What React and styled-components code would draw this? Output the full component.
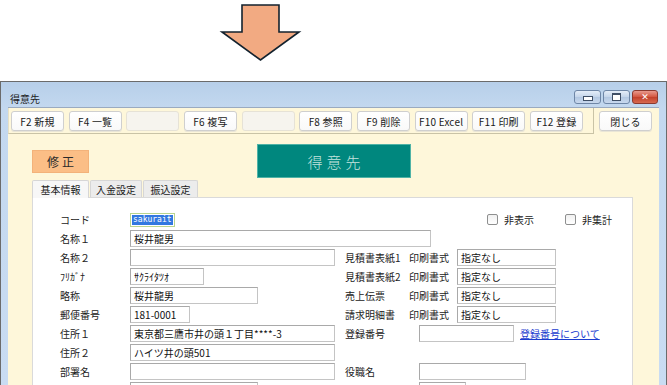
import styled, { createGlobalStyle } from "styled-components";

const GlobalStyle = createGlobalStyle`
  html, body {
    margin: 0;
    padding: 0;
    background: #ffffff;
  }
  body {
    font-family: "Noto Sans CJK JP", "Noto Sans", sans-serif;
    font-size: 10px;
    color: #222;
  }
`;

const Page = styled.div`
  width: 667px;
  height: 385px;
  overflow: hidden;
  display: flex;
  flex-direction: column;
`;

const ArrowArea = styled.div`
  height: 81px;
  flex: none;
`;

const Window = styled.div`
  flex: 1;
  display: flex;
  flex-direction: column;
  border: 1px solid #6b6b6b;
  border-bottom: none;
  background: linear-gradient(#b7cfe9 0px, #c3d8ef 26px, #c9dcf2 100%);
  padding: 0 7px;
  min-height: 0;
`;

const TitleBar = styled.div`
  height: 25px;
  flex: none;
  display: flex;
  align-items: flex-start;
  justify-content: space-between;
`;

const TitleText = styled.div`
  padding: 9px 0 0 2px;
  font-size: 10px;
  color: #1e1e1e;
`;

const WinButtons = styled.div`
  display: flex;
  gap: 2px;
  margin-top: 8px;
  margin-right: 1px;
`;

const WinBtn = styled.div`
  width: ${(p) => (p.$close ? 26 : 27)}px;
  height: 14px;
  box-sizing: border-box;
  border: 1px solid ${(p) => (p.$close ? "#8b3a30" : "#6e86a6")};
  border-radius: 3px;
  background: ${(p) =>
    p.$close
      ? "linear-gradient(#e8998d, #d3553f 50%, #c2402b 51%, #d76a4f)"
      : "linear-gradient(#e4edf8, #c4d5ea 50%, #b2c7e1 51%, #c9d9ee)"};
  display: flex;
  align-items: center;
  justify-content: center;
  color: #fff;
  font-family: "DejaVu Sans", sans-serif;
  font-size: 9px;
  font-weight: bold;
  line-height: 1;
`;

const MinGlyph = styled.span`
  display: block;
  width: 8px;
  height: 3px;
  margin-top: 3px;
  background: #fff;
  border: 1px solid #3f4f66;
`;

const MaxGlyph = styled.span`
  display: block;
  width: 7px;
  height: 5px;
  border: 1px solid #3f4f66;
  border-top-width: 2px;
  background: #fff;
`;

const Client = styled.div`
  flex: 1;
  background: #fef7da;
  border-top: 1px solid #9aaac0;
  display: flex;
  flex-direction: column;
  min-height: 0;
`;

const TopBar = styled.div`
  display: flex;
  align-items: flex-start;
  flex: none;
`;

const ToolPanel = styled.div`
  width: 586px;
  box-sizing: border-box;
  display: flex;
  gap: 4.67px;
  padding: 3px 0 2px 2px;
  border-right: 1px solid #c9c3a6;
  border-bottom: 1px solid #c9c3a6;
  border-left: 1px solid #e6e0c6;
`;

const ToolButton = styled.div`
  width: 53px;
  height: 20px;
  box-sizing: border-box;
  border: 1px solid ${(p) => (p.$blank ? "#e6e2d6" : "#cfcfcf")};
  border-radius: 3px;
  background: ${(p) =>
    p.$blank ? "#f6f4ee" : "linear-gradient(#ffffff, #f9f9f9)"};
  box-shadow: ${(p) => (p.$blank ? "none" : "0 1px 0 #e9e5d6")};
  display: flex;
  align-items: center;
  justify-content: center;
  font-size: 10px;
  color: #1a1a1a;
  white-space: nowrap;
  letter-spacing: 0.2px;
`;

const CloseButton = styled(ToolButton)`
  margin: 3px 0 0 5px;
`;

const HeaderRow = styled.div`
  display: flex;
  align-items: center;
  padding-left: 24px;
  margin-top: 10px;
  flex: none;
`;

const ModeBadge = styled.div`
  width: 57px;
  height: 23px;
  background: #fbbe86;
  border: 1px solid #f3b27a;
  box-sizing: border-box;
  display: flex;
  align-items: center;
  justify-content: center;
  font-size: 12px;
  color: #2a2a2a;
  letter-spacing: 3px;
  padding-left: 3px;
`;

const FormTitle = styled.div`
  margin-left: 168px;
  width: 154px;
  height: 34px;
  box-sizing: border-box;
  background: #00877e;
  border: 1px solid #4fb3a6;
  display: flex;
  align-items: center;
  justify-content: center;
  font-size: 15px;
  font-weight: 300;
  letter-spacing: 4px;
  color: #c4e4de;
  padding-left: 4px;
`;

const Tabs = styled.div`
  display: flex;
  margin: 2px 0 0 24px;
  height: 17px;
  flex: none;
`;

const Tab = styled.div`
  width: ${(p) => p.$w}px;
  box-sizing: border-box;
  border: 1px solid #d6d6d6;
  border-bottom: none;
  border-radius: 2px 2px 0 0;
  background: ${(p) => (p.$active ? "#f7f7f7" : "#ececec")};
  margin-right: 1px;
  display: flex;
  align-items: center;
  justify-content: center;
  font-size: 10px;
  color: #1a1a1a;
  position: relative;
  z-index: ${(p) => (p.$active ? 1 : 0)};
  height: ${(p) => (p.$active ? 18 : 17)}px;
`;

const Panel = styled.div`
  margin-left: 24px;
  width: 601px;
  box-sizing: border-box;
  flex: 1;
  background: #ffffff;
  border: 1px solid #dadada;
  padding: 12px 0 0 27px;
`;

const Row = styled.div`
  display: grid;
  grid-template-columns: 70px 215px 1fr;
  height: 19px;
  align-items: center;
`;

const Label = styled.div`
  font-size: 10px;
  color: #222;
  white-space: nowrap;
`;

const Field = styled.div`
  width: ${(p) => p.$w}px;
  height: 17px;
  box-sizing: border-box;
  border: 1px solid #a9a9a9;
  border-right-color: #c4c4c4;
  border-bottom-color: #c4c4c4;
  background: #fff;
  padding: 0 3px;
  font-size: 10px;
  line-height: 15px;
  color: #111;
  white-space: nowrap;
  overflow: hidden;
  grid-column: ${(p) => (p.$span ? "span 2" : "auto")};
`;

const CodeField = styled.div`
  width: 45px;
  height: 14px;
  box-sizing: border-box;
  border: 1px solid #b9d58f;
  background: #fff;
  padding: 1px;
  display: flex;
`;

const Selected = styled.span`
  background: #3278e0;
  color: #fff;
  font-family: "DejaVu Sans Mono", monospace;
  font-size: 8px;
  line-height: 10px;
  padding: 0 1px;
`;

const Right = styled.div`
  display: flex;
  align-items: center;
`;

const RightLabel = styled(Label)`
  width: ${(p) => p.$w}px;
`;

const Checks = styled.div`
  display: flex;
  padding-left: 142px;
`;

const CheckItem = styled.label`
  width: 78px;
  display: flex;
  align-items: center;
  gap: 6px;
  font-size: 10px;
  color: #222;
`;

const Box = styled.span`
  width: 11px;
  height: 11px;
  box-sizing: border-box;
  border: 1px solid #8e8f8f;
  border-radius: 2px;
  background: linear-gradient(#f0f0f0, #ffffff);
`;

const LinkText = styled.a`
  margin-left: 6px;
  color: #1b3ccf;
  text-decoration: underline;
  font-size: 10px;
  white-space: nowrap;
`;

const toolButtons = [
  "F2 新規",
  "F4 一覧",
  "",
  "F6 複写",
  "",
  "F8 参照",
  "F9 削除",
  "F10 Excel",
  "F11 印刷",
  "F12 登録",
];

const printRows = ["見積書表紙1", "見積書表紙2", "売上伝票", "請求明細書"];

function PrintSetting({ name }) {
  return (
    <Right>
      <RightLabel $w={64}>{name}</RightLabel>
      <RightLabel $w={48}>印刷書式</RightLabel>
      <Field $w={99}>指定なし</Field>
    </Right>
  );
}

export default function App() {
  return (
    <Page>
      <GlobalStyle />
      <ArrowArea>
        <svg width="667" height="81" viewBox="0 0 667 81">
          <polygon
            points="242,5 279,5 279,32 299,32 260.5,60 222,32 242,32"
            fill="#f2aa82"
            stroke="#13222e"
            strokeWidth="1.6"
            strokeLinejoin="miter"
          />
        </svg>
      </ArrowArea>

      <Window>
        <TitleBar>
          <TitleText>得意先</TitleText>
          <WinButtons>
            <WinBtn>
              <MinGlyph />
            </WinBtn>
            <WinBtn>
              <MaxGlyph />
            </WinBtn>
            <WinBtn $close>✕</WinBtn>
          </WinButtons>
        </TitleBar>

        <Client>
          <TopBar>
            <ToolPanel>
              {toolButtons.map((t, i) => (
                <ToolButton key={i} $blank={!t}>
                  {t}
                </ToolButton>
              ))}
            </ToolPanel>
            <CloseButton>閉じる</CloseButton>
          </TopBar>

          <HeaderRow>
            <ModeBadge>修正</ModeBadge>
            <FormTitle>得意先</FormTitle>
          </HeaderRow>

          <Tabs>
            <Tab $w={57} $active>基本情報</Tab>
            <Tab $w={52}>入金設定</Tab>
            <Tab $w={55}>振込設定</Tab>
          </Tabs>

          <Panel>
            <Row>
              <Label>コード</Label>
              <div>
                <CodeField>
                  <Selected>sakurait</Selected>
                </CodeField>
              </div>
              <Checks>
                <CheckItem>
                  <Box />
                  非表示
                </CheckItem>
                <CheckItem>
                  <Box />
                  非集計
                </CheckItem>
              </Checks>
            </Row>
            <Row>
              <Label>名称１</Label>
              <Field $w={301} $span>
                桜井龍男
              </Field>
            </Row>
            <Row>
              <Label>名称２</Label>
              <Field $w={205} />
              <PrintSetting name={printRows[0]} />
            </Row>
            <Row>
              <Label>ﾌﾘｶﾞﾅ</Label>
              <Field $w={74}>ｻｸﾗｲﾀﾂｵ</Field>
              <PrintSetting name={printRows[1]} />
            </Row>
            <Row>
              <Label>略称</Label>
              <Field $w={128}>桜井龍男</Field>
              <PrintSetting name={printRows[2]} />
            </Row>
            <Row>
              <Label>郵便番号</Label>
              <Field $w={60}>181-0001</Field>
              <PrintSetting name={printRows[3]} />
            </Row>
            <Row>
              <Label>住所１</Label>
              <Field $w={205}>東京都三鷹市井の頭１丁目****-3</Field>
              <Right>
                <RightLabel $w={74}>登録番号</RightLabel>
                <Field $w={95} />
                <LinkText>登録番号について</LinkText>
              </Right>
            </Row>
            <Row>
              <Label>住所２</Label>
              <Field $w={205}>ハイツ井の頭501</Field>
            </Row>
            <Row>
              <Label>部署名</Label>
              <Field $w={205} />
              <Right>
                <RightLabel $w={74}>役職名</RightLabel>
                <Field $w={107} />
              </Right>
            </Row>
            <Row>
              <Label />
              <Field $w={128} />
              <Right>
                <RightLabel $w={74} />
                <Field $w={47} />
              </Right>
            </Row>
          </Panel>
        </Client>
      </Window>
    </Page>
  );
}
